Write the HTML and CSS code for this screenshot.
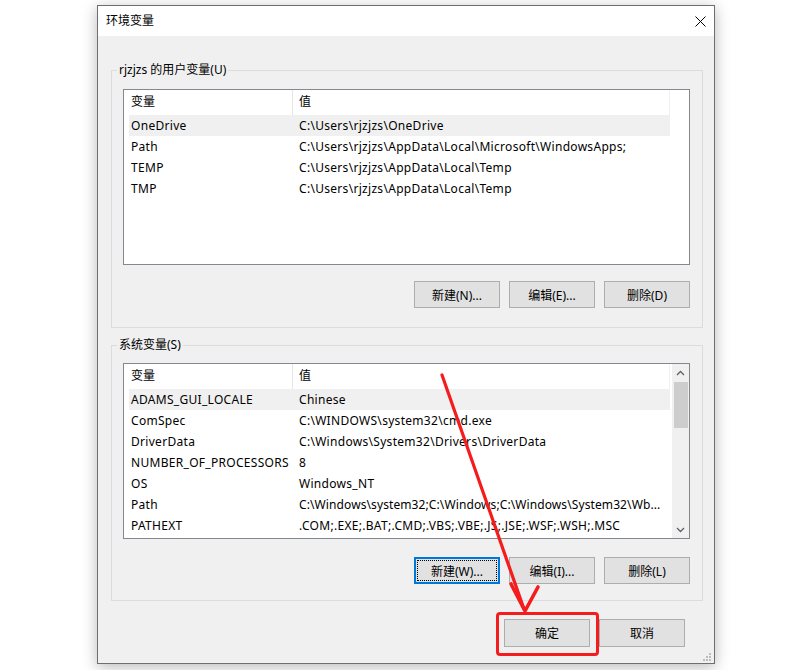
FILE: index.html
```html
<!DOCTYPE html>
<html>
<head>
<meta charset="utf-8">
<link rel="stylesheet" href="styles.css">
</head>
<body>
<div class="window">
  <div class="titlebar">
    <span class="title">环境变量</span>
    <svg class="close" viewBox="0 0 11 11" width="11" height="11"><path d="M0.5 0.5 L10.5 10.5 M10.5 0.5 L0.5 10.5" stroke="#000" stroke-width="1" fill="none"/></svg>
  </div>
  <div class="content">
    <div class="group g1">
      <div class="legend">rjzjzs 的用户变量(U)</div>
      <div class="list l1">
        <div class="list-main">
          <div class="lhead"><div class="hc h1">变量</div><div class="hc h2">值</div></div>
          <div class="row sel"><span class="c1">OneDrive</span><span class="c2">C:\Users\rjzjzs\OneDrive</span></div>
          <div class="row"><span class="c1">Path</span><span class="c2">C:\Users\rjzjzs\AppData\Local\Microsoft\WindowsApps;</span></div>
          <div class="row"><span class="c1">TEMP</span><span class="c2">C:\Users\rjzjzs\AppData\Local\Temp</span></div>
          <div class="row"><span class="c1">TMP</span><span class="c2">C:\Users\rjzjzs\AppData\Local\Temp</span></div>
        </div>
      </div>
      <div class="btns">
        <button class="btn">新建(N)...</button>
        <button class="btn">编辑(E)...</button>
        <button class="btn">删除(D)</button>
      </div>
    </div>

    <div class="group g2">
      <div class="legend">系统变量(S)</div>
      <div class="list l2">
        <div class="list-main">
          <div class="lhead"><div class="hc h1">变量</div><div class="hc h2">值</div></div>
          <div class="row sel"><span class="c1">ADAMS_GUI_LOCALE</span><span class="c2">Chinese</span></div>
          <div class="row"><span class="c1">ComSpec</span><span class="c2">C:\WINDOWS\system32\cmd.exe</span></div>
          <div class="row"><span class="c1">DriverData</span><span class="c2">C:\Windows\System32\Drivers\DriverData</span></div>
          <div class="row"><span class="c1">NUMBER_OF_PROCESSORS</span><span class="c2">8</span></div>
          <div class="row"><span class="c1">OS</span><span class="c2">Windows_NT</span></div>
          <div class="row"><span class="c1">Path</span><span class="c2 tight">C:\Windows\system32;C:\Windows;C:\Windows\System32\Wb...</span></div>
          <div class="row"><span class="c1">PATHEXT</span><span class="c2">.COM;.EXE;.BAT;.CMD;.VBS;.VBE;.JS;.JSE;.WSF;.WSH;.MSC</span></div>
        </div>
        <div class="vscroll">
          <div class="sb-arrow"><svg viewBox="0 0 9 6" width="9" height="6"><path d="M1 5 L4.5 1.5 L8 5" stroke="#606060" stroke-width="1.3" fill="none"/></svg></div>
          <div class="sb-track"><div class="sb-thumb"></div></div>
          <div class="sb-arrow"><svg viewBox="0 0 9 6" width="9" height="6"><path d="M1 1 L4.5 4.5 L8 1" stroke="#606060" stroke-width="1.3" fill="none"/></svg></div>
        </div>
      </div>
      <div class="btns">
        <button class="btn focused"><span class="focus-rect">新建(W)...</span></button>
        <button class="btn">编辑(I)...</button>
        <button class="btn">删除(L)</button>
      </div>
    </div>

    <div class="footer">
      <span class="ok-wrap"><button class="btn tall">确定</button></span>
      <button class="btn tall">取消</button>
    </div>
  </div>
  <svg class="grip" viewBox="0 0 10 10" width="10" height="10">
    <rect x="7" y="1" width="2" height="2" fill="#bdbdbd"/>
    <rect x="4" y="4" width="2" height="2" fill="#bdbdbd"/>
    <rect x="7" y="4" width="2" height="2" fill="#bdbdbd"/>
    <rect x="1" y="7" width="2" height="2" fill="#bdbdbd"/>
    <rect x="4" y="7" width="2" height="2" fill="#bdbdbd"/>
    <rect x="7" y="7" width="2" height="2" fill="#bdbdbd"/>
  </svg>
</div>
<svg class="annot" viewBox="0 0 794 670" width="794" height="670">
  <path d="M442 375 L524 609" stroke="#f41c1c" stroke-width="3.2" fill="none" stroke-linecap="round"/>
  <path d="M511 584 L525 611 L538 587" stroke="#f41c1c" stroke-width="3.6" fill="none" stroke-linecap="round" stroke-linejoin="round"/>
</svg>
</body>
</html>
```

FILE: styles.css
```css
*, *::before, *::after { box-sizing: border-box; }
html, body { margin: 0; padding: 0; }
body {
  width: 794px;
  height: 670px;
  overflow: hidden;
  background: #fff;
  font-family: "Noto Sans", "Noto Sans CJK SC", sans-serif;
  font-size: 12px;
  color: #000;
  position: relative;
}
.window {
  margin: 5px 0 0 97px;
  width: 618px;
  height: 659px;
  border: 1px solid #6e6e6e;
  background: #f0f0f0;
  box-shadow: 0 3px 14px rgba(0, 0, 0, 0.28);
  display: flex;
  flex-direction: column;
  position: relative;
}
.titlebar {
  height: 30px;
  flex: none;
  background: #fff;
  display: flex;
  align-items: center;
  justify-content: space-between;
  padding: 0 8px 0 8px;
}
.title { line-height: 16px; }
.close { display: block; }
.content {
  flex: 1;
  padding: 34px 11px 0 13px;
  display: flex;
  flex-direction: column;
}
.group {
  border: 1px solid #dcdcdc;
  padding: 0 12px 19px 11px;
}
.g2 { margin-top: 17px; padding-bottom: 16px; }
.legend {
  width: max-content;
  margin: -9px 0 0 -6px;
  padding: 0 2px;
  background: #f0f0f0;
  line-height: 16px;
}
.list {
  height: 176px;
  border: 1px solid #828790;
  background: #fff;
  display: flex;
}
.l1 { margin-top: 11px; }
.l2 { margin-top: 10px; }
.list-main { width: 546px; flex: none; }
.lhead {
  height: 25px;
  display: flex;
  border-right: 1px solid #f0f0f0;
}
.hc { line-height: 24px; }
.h1 {
  width: 169px;
  padding-left: 7px;
  border-right: 1px solid #e5e5e5;
}
.h2 { flex: 1; padding-left: 6px; }
.row {
  height: 21px;
  line-height: 21px;
  margin-left: 5px;
  width: 541px;
  display: flex;
  white-space: nowrap;
  letter-spacing: 0.3px;
}
.row.sel { background: #f0f0f0; }
.c1 { width: 164px; padding-left: 2px; flex: none; overflow: hidden; }
.c2 { flex: 1; padding-left: 6px; overflow: hidden; }
.c2.tight { letter-spacing: 0.1px; }
.vscroll {
  margin-left: auto;
  width: 17px;
  background: #f0f0f0;
  display: flex;
  flex-direction: column;
}
.sb-arrow {
  height: 17px;
  display: flex;
  align-items: center;
  justify-content: center;
}
.sb-track { flex: 1; padding: 1px 1px 0 2px; }
.sb-thumb { height: 46px; background: #cdcdcd; }
.btns {
  display: flex;
  justify-content: flex-end;
  gap: 9px;
  margin-top: 16px;
}
.g2 .btns { margin-top: 18px; }
.btn {
  width: 86px;
  height: 27px;
  margin: 0;
  padding: 0;
  background: #e1e1e1;
  border: 1px solid #adadad;
  font-family: inherit;
  font-size: 12px;
  color: #000;
  display: flex;
  align-items: center;
  justify-content: center;
}
.btn.tall { height: 28px; }
.btn.focused {
  border: 2px solid #0078d7;
  padding: 1px;
}
.focus-rect {
  flex: 1;
  align-self: stretch;
  display: flex;
  align-items: center;
  justify-content: center;
  border: 1px dotted #000;
}
.footer {
  display: flex;
  justify-content: flex-end;
  gap: 9px;
  margin-top: 18px;
  padding-right: 18px;
}
.ok-wrap { position: relative; display: block; }
.ok-wrap::after {
  content: "";
  position: absolute;
  left: -8px;
  top: -7px;
  width: 103px;
  height: 44px;
  border: 3px solid #f41c1c;
  border-radius: 4px;
}
.grip { position: absolute; right: 2px; bottom: 1px; }
.annot { position: absolute; left: 0; top: 0; pointer-events: none; }
```
